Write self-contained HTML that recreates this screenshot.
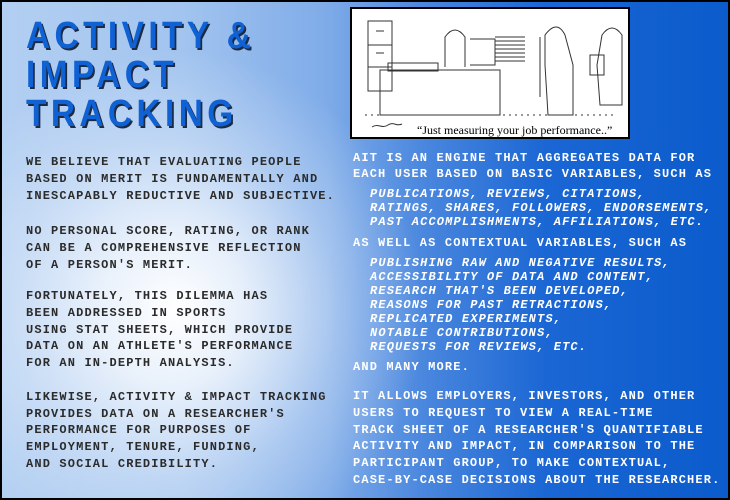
<!DOCTYPE html>
<html><head><meta charset="utf-8"><style>
html,body{margin:0;padding:0}
body{width:730px;height:500px;overflow:hidden;position:relative;
background:radial-gradient(ellipse 250px 260px at 175px 310px,rgba(255,255,255,1) 0%,rgba(255,255,255,.75) 30%,rgba(255,255,255,.3) 65%,rgba(255,255,255,0) 100%),
linear-gradient(90deg,#b3cff2 0%,#a2c4ef 25%,#7eabe8 45%,#4a87de 58%,#1a66d4 75%,#0b5bcc 100%);
font-family:"Liberation Mono",monospace}
body:after{content:"";position:absolute;left:0;top:0;width:726px;height:496px;border:2px solid #000;pointer-events:none}
.t{position:absolute;left:26px;font-family:"Liberation Sans",sans-serif;font-weight:bold;font-size:38px;color:#1062d4;text-shadow:2px 2px 0 #1c2b44;letter-spacing:5px;line-height:38px;white-space:pre;transform:scaleX(0.88);transform-origin:0 0}
.l{position:absolute;white-space:pre;font-size:12px;letter-spacing:1.15px;line-height:12px;font-weight:bold}
.d{color:#2b2b2b}
.w{color:#fff}
.i{font-style:italic}
</style></head><body>
<div class="t" style="top:17px">ACTIVITY &amp;</div>
<div class="t" style="top:56px">IMPACT</div>
<div class="t" style="top:95px">TRACKING</div>

<div class="l d" style="left:26px;top:156px">WE BELIEVE THAT EVALUATING PEOPLE</div>
<div class="l d" style="left:26px;top:173px">BASED ON MERIT IS FUNDAMENTALLY AND</div>
<div class="l d" style="left:26px;top:190px">INESCAPABLY REDUCTIVE AND SUBJECTIVE.</div>
<div class="l d" style="left:26px;top:225px">NO PERSONAL SCORE, RATING, OR RANK</div>
<div class="l d" style="left:26px;top:242px">CAN BE A COMPREHENSIVE REFLECTION</div>
<div class="l d" style="left:26px;top:259px">OF A PERSON'S MERIT.</div>
<div class="l d" style="left:26px;top:290px">FORTUNATELY, THIS DILEMMA HAS</div>
<div class="l d" style="left:26px;top:307px">BEEN ADDRESSED IN SPORTS</div>
<div class="l d" style="left:26px;top:324px">USING STAT SHEETS, WHICH PROVIDE</div>
<div class="l d" style="left:26px;top:340px">DATA ON AN ATHLETE'S PERFORMANCE</div>
<div class="l d" style="left:26px;top:357px">FOR AN IN-DEPTH ANALYSIS.</div>
<div class="l d" style="left:26px;top:391px">LIKEWISE, ACTIVITY &amp; IMPACT TRACKING</div>
<div class="l d" style="left:26px;top:408px">PROVIDES DATA ON A RESEARCHER'S</div>
<div class="l d" style="left:26px;top:424px">PERFORMANCE FOR PURPOSES OF</div>
<div class="l d" style="left:26px;top:441px">EMPLOYMENT, TENURE, FUNDING,</div>
<div class="l d" style="left:26px;top:458px">AND SOCIAL CREDIBILITY.</div>

<div class="l w" style="left:353px;top:152px">AIT IS AN ENGINE THAT AGGREGATES DATA FOR</div>
<div class="l w" style="left:353px;top:168px">EACH USER BASED ON BASIC VARIABLES, SUCH AS</div>
<div class="l w i" style="left:370px;top:188px">PUBLICATIONS, REVIEWS, CITATIONS,</div>
<div class="l w i" style="left:370px;top:202px">RATINGS, SHARES, FOLLOWERS, ENDORSEMENTS,</div>
<div class="l w i" style="left:370px;top:216px">PAST ACCOMPLISHMENTS, AFFILIATIONS, ETC.</div>
<div class="l w" style="left:353px;top:237px">AS WELL AS CONTEXTUAL VARIABLES, SUCH AS</div>
<div class="l w i" style="left:370px;top:257px">PUBLISHING RAW AND NEGATIVE RESULTS,</div>
<div class="l w i" style="left:370px;top:271px">ACCESSIBILITY OF DATA AND CONTENT,</div>
<div class="l w i" style="left:370px;top:285px">RESEARCH THAT'S BEEN DEVELOPED,</div>
<div class="l w i" style="left:370px;top:299px">REASONS FOR PAST RETRACTIONS,</div>
<div class="l w i" style="left:370px;top:313px">REPLICATED EXPERIMENTS,</div>
<div class="l w i" style="left:370px;top:327px">NOTABLE CONTRIBUTIONS,</div>
<div class="l w i" style="left:370px;top:341px">REQUESTS FOR REVIEWS, ETC.</div>
<div class="l w" style="left:353px;top:361px">AND MANY MORE.</div>
<div class="l w" style="left:353px;top:390px">IT ALLOWS EMPLOYERS, INVESTORS, AND OTHER</div>
<div class="l w" style="left:353px;top:407px">USERS TO REQUEST TO VIEW A REAL-TIME</div>
<div class="l w" style="left:353px;top:424px">TRACK SHEET OF A RESEARCHER'S QUANTIFIABLE</div>
<div class="l w" style="left:353px;top:440px">ACTIVITY AND IMPACT, IN COMPARISON TO THE</div>
<div class="l w" style="left:353px;top:457px">PARTICIPANT GROUP, TO MAKE CONTEXTUAL,</div>
<div class="l w" style="left:353px;top:474px">CASE-BY-CASE DECISIONS ABOUT THE RESEARCHER.</div>

<svg style="position:absolute;left:350px;top:7px" width="280" height="132" viewBox="0 0 280 132">
<rect x="1" y="1" width="278" height="130" fill="#fff" stroke="#000" stroke-width="2"/>
<g fill="none" stroke="#333" stroke-width="1">
<rect x="18" y="14" width="24" height="70"/><path d="M18 38h24M18 60h24M26 24h8M26 46h8"/>
<path d="M38 56h50v8H38zM30 63h120v45H30z"/>
<path d="M95 60v-30q10-14 20 0v30"/><path d="M120 58h25v-26h-25"/>
<path d="M145 30h30M145 34h30M145 38h30M145 42h30M145 46h30M145 50h30M145 54h30"/>
<path d="M195 28q12-16 20 0l8 30v50h-25l-3-50z"/><path d="M190 30v60"/>
<path d="M252 28q10-14 20 0v70h-22l-3-40z"/><path d="M240 48h14v20h-14z"/>
<path d="M15 108h250" stroke-dasharray="2 4"/>
<path d="M22 120c6-4 10 2 16-2s8 2 14-1"/>
</g>
<text x="67" y="127" font-family="Liberation Serif,serif" font-size="12" fill="#000">“Just measuring your job performance..”</text>
</svg>
</body></html>
